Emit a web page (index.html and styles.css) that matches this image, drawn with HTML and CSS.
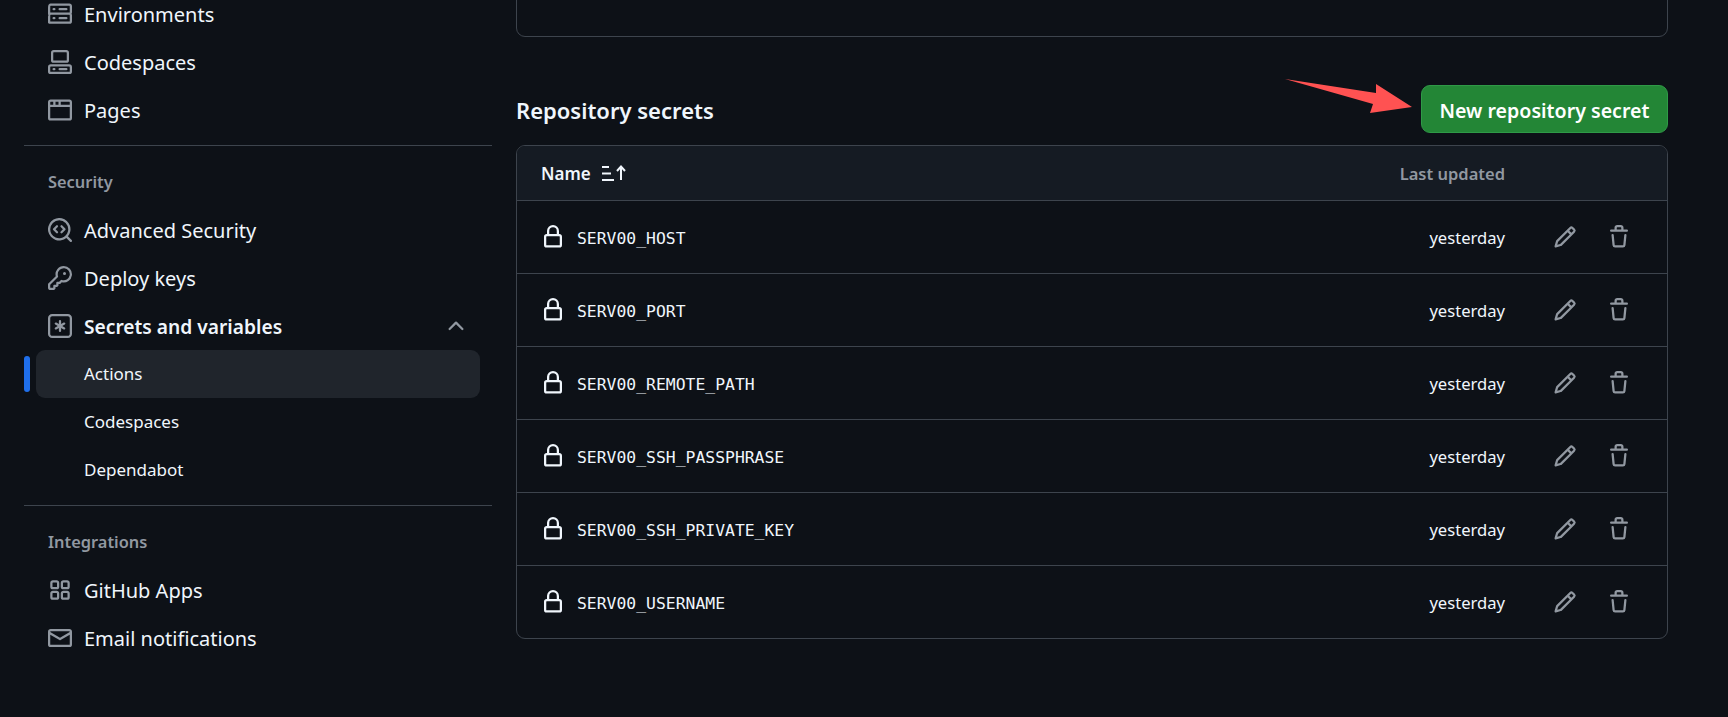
FILE: index.html
```html
<!DOCTYPE html>
<html lang="en">

<head>
    <meta charset="UTF-8">
    <meta name="viewport" content="width=device-width, initial-scale=1.0">
    <title>Actions secrets</title>
    <link rel="stylesheet" href="styles.css">
</head>

<body>
    <svg class="iconos" width="0" height="0">
        <symbol id="i-server" viewBox="0 0 16 16"><path d="M1.75 1h12.5c.966 0 1.75.784 1.75 1.75v4c0 .372-.116.717-.314 1 .198.283.314.628.314 1v4a1.75 1.75 0 0 1-1.75 1.75H1.75A1.75 1.75 0 0 1 0 13.75v-4c0-.372.116-.717.314-1a1.739 1.739 0 0 1-.314-1v-4C0 1.784.784 1 1.75 1ZM1.5 2.75v4c0 .138.112.25.25.25h12.5a.25.25 0 0 0 .25-.25v-4a.25.25 0 0 0-.25-.25H1.75a.25.25 0 0 0-.25.25Zm.25 5.75a.25.25 0 0 0-.25.25v4c0 .138.112.25.25.25h12.5a.25.25 0 0 0 .25-.25v-4a.25.25 0 0 0-.25-.25ZM7 4.75A.75.75 0 0 1 7.75 4h4.5a.75.75 0 0 1 0 1.5h-4.5A.75.75 0 0 1 7 4.75ZM7.75 10h4.5a.75.75 0 0 1 0 1.5h-4.5a.75.75 0 0 1 0-1.5ZM3 4.75A.75.75 0 0 1 3.75 4h.5a.75.75 0 0 1 0 1.5h-.5A.75.75 0 0 1 3 4.75ZM3.75 10h.5a.75.75 0 0 1 0 1.5h-.5a.75.75 0 0 1 0-1.5Z"/></symbol>
        <symbol id="i-codespaces" viewBox="0 0 16 16"><path d="M0 11.25c0-.966.784-1.75 1.75-1.75h12.5c.966 0 1.75.784 1.75 1.75v3A1.75 1.75 0 0 1 14.25 16H1.75A1.75 1.75 0 0 1 0 14.25Zm2-9.5C2 .784 2.784 0 3.75 0h8.5C13.216 0 14 .784 14 1.75v5a1.75 1.75 0 0 1-1.75 1.75h-8.5A1.75 1.75 0 0 1 2 6.75Zm1.75-.25a.25.25 0 0 0-.25.25v5c0 .138.112.25.25.25h8.5a.25.25 0 0 0 .25-.25v-5a.25.25 0 0 0-.25-.25Zm-2 9.5a.25.25 0 0 0-.25.25v3c0 .138.112.25.25.25h12.5a.25.25 0 0 0 .25-.25v-3a.25.25 0 0 0-.25-.25Z"/><path d="M7 12.75a.75.75 0 0 1 .75-.75h4.5a.75.75 0 0 1 0 1.5h-4.5a.75.75 0 0 1-.75-.75Zm-4 0a.75.75 0 0 1 .75-.75h.5a.75.75 0 0 1 0 1.5h-.5a.75.75 0 0 1-.75-.75Z"/></symbol>
        <symbol id="i-browser" viewBox="0 0 16 16"><path d="M0 2.75C0 1.784.784 1 1.75 1h12.5c.966 0 1.75.784 1.75 1.75v10.5A1.75 1.75 0 0 1 14.25 15H1.75A1.75 1.75 0 0 1 0 13.25ZM14.5 6h-13v7.25c0 .138.112.25.25.25h12.5a.25.25 0 0 0 .25-.25Zm-6-3.5v2h6V2.75a.25.25 0 0 0-.25-.25ZM5 2.5v2h2v-2Zm-3.25 0a.25.25 0 0 0-.25.25V4.5h2v-2Z"/></symbol>
        <symbol id="i-scan" viewBox="0 0 16 16"><path d="M8.47 4.97a.75.75 0 0 0 0 1.06L9.94 7.5 8.47 8.97a.75.75 0 1 0 1.06 1.06l2-2a.75.75 0 0 0 0-1.06l-2-2a.75.75 0 0 0-1.06 0ZM6.53 6.03a.75.75 0 0 0-1.06-1.06l-2 2a.75.75 0 0 0 0 1.06l2 2a.75.75 0 1 0 1.06-1.06L5.06 7.5l1.47-1.47Z"/><path d="M12.246 13.307a7.501 7.501 0 1 1 1.06-1.06l2.474 2.473a.749.749 0 0 1-.326 1.275.749.749 0 0 1-.734-.215ZM1.5 7.5a6.002 6.002 0 0 0 3.547 5.475A6.002 6.002 0 0 0 13.5 7.5 6.002 6.002 0 0 0 7.5 1.5a6 6 0 0 0-6 6Z"/></symbol>
        <symbol id="i-key" viewBox="0 0 16 16"><path d="M10.5 0a5.499 5.499 0 1 1-1.288 10.848l-.932.932a.749.749 0 0 1-.53.22H7v.75a.749.749 0 0 1-.22.53l-.5.5a.749.749 0 0 1-.53.22H5v.75a.749.749 0 0 1-.22.53l-.5.5a.749.749 0 0 1-.53.22h-2A1.75 1.75 0 0 1 0 14.25v-2c0-.199.079-.389.22-.53l4.932-4.932A5.5 5.5 0 0 1 10.5 0Zm-4 5.5c-.001.431.069.86.205 1.269a.75.75 0 0 1-.181.768L1.5 12.56v1.69c0 .138.112.25.25.25h1.69l.06-.06v-1.19a.75.75 0 0 1 .75-.75h1.19l.06-.06v-1.19a.75.75 0 0 1 .75-.75h1.19l1.023-1.025a.75.75 0 0 1 .768-.18A4 4 0 1 0 6.5 5.5ZM11 6a1 1 0 1 1 0-2 1 1 0 0 1 0 2Z"/></symbol>
        <symbol id="i-asterisk" viewBox="0 0 16 16"><path d="M0 2.75A2.75 2.75 0 0 1 2.75 0h10.5A2.75 2.75 0 0 1 16 2.75v10.5A2.75 2.75 0 0 1 13.25 16H2.75A2.75 2.75 0 0 1 0 13.25ZM2.75 1.5c-.69 0-1.25.56-1.25 1.25v10.5c0 .69.56 1.25 1.25 1.25h10.5c.69 0 1.25-.56 1.25-1.25V2.75c0-.69-.56-1.25-1.25-1.25Z"/><path d="M8 4a.75.75 0 0 1 .75.75V6.7l1.69-.975a.75.75 0 0 1 .75 1.3L9.5 8l1.69.976a.75.75 0 0 1-.75 1.298L8.75 9.3v1.951a.75.75 0 0 1-1.5 0V9.299l-1.69.976a.75.75 0 0 1-.75-1.3L6.5 8l-1.69-.975a.75.75 0 0 1 .75-1.3l1.69.976V4.75A.75.75 0 0 1 8 4Z"/></symbol>
        <symbol id="i-chevron" viewBox="0 0 16 16"><path d="M3.22 10.53a.749.749 0 0 1 0-1.06l4.25-4.25a.749.749 0 0 1 1.06 0l4.25 4.25a.749.749 0 0 1-.326 1.275.749.749 0 0 1-.734-.215L8 6.811 4.28 10.53a.749.749 0 0 1-1.06 0Z"/></symbol>
        <symbol id="i-apps" viewBox="0 0 16 16"><path d="M1.5 3.25c0-.966.784-1.75 1.75-1.75h2.5c.966 0 1.75.784 1.75 1.75v2.5A1.75 1.75 0 0 1 5.75 7.5h-2.5A1.75 1.75 0 0 1 1.5 5.75Zm7 0c0-.966.784-1.75 1.75-1.75h2.5c.966 0 1.75.784 1.75 1.75v2.5a1.75 1.75 0 0 1-1.75 1.75h-2.5A1.75 1.75 0 0 1 8.5 5.75Zm-7 7c0-.966.784-1.75 1.75-1.75h2.5c.966 0 1.75.784 1.75 1.75v2.5a1.75 1.75 0 0 1-1.75 1.75h-2.5a1.75 1.75 0 0 1-1.75-1.75Zm7 0c0-.966.784-1.75 1.75-1.75h2.5c.966 0 1.75.784 1.75 1.75v2.5a1.75 1.75 0 0 1-1.75 1.75h-2.5a1.75 1.75 0 0 1-1.75-1.75ZM3.25 3a.25.25 0 0 0-.25.25v2.5c0 .138.112.25.25.25h2.5A.25.25 0 0 0 6 5.75v-2.5A.25.25 0 0 0 5.75 3Zm7 0a.25.25 0 0 0-.25.25v2.5c0 .138.112.25.25.25h2.5a.25.25 0 0 0 .25-.25v-2.5a.25.25 0 0 0-.25-.25ZM3 10.25v2.5c0 .138.112.25.25.25h2.5a.25.25 0 0 0 .25-.25v-2.5a.25.25 0 0 0-.25-.25h-2.5a.25.25 0 0 0-.25.25Zm7.25-.25a.25.25 0 0 0-.25.25v2.5c0 .138.112.25.25.25h2.5a.25.25 0 0 0 .25-.25v-2.5a.25.25 0 0 0-.25-.25Z"/></symbol>
        <symbol id="i-mail" viewBox="0 0 16 16"><path d="M1.75 2h12.5c.966 0 1.75.784 1.75 1.75v8.5A1.75 1.75 0 0 1 14.25 14H1.75A1.75 1.75 0 0 1 0 12.25v-8.5C0 2.784.784 2 1.75 2ZM1.5 12.251c0 .138.112.25.25.25h12.5a.25.25 0 0 0 .25-.25V5.809L8.38 9.397a.75.75 0 0 1-.76 0L1.5 5.809v6.442Zm13-8.181v-.32a.25.25 0 0 0-.25-.25H1.75a.25.25 0 0 0-.25.25v.32L8 7.88Z"/></symbol>
        <symbol id="i-lock" viewBox="0 0 16 16"><path d="M4 4a4 4 0 0 1 8 0v2h.25c.966 0 1.75.784 1.75 1.75v5.5A1.75 1.75 0 0 1 12.25 15h-8.5A1.75 1.75 0 0 1 2 13.25v-5.5C2 6.784 2.784 6 3.75 6H4Zm8.25 3.5h-8.5a.25.25 0 0 0-.25.25v5.5c0 .138.112.25.25.25h8.5a.25.25 0 0 0 .25-.25v-5.5a.25.25 0 0 0-.25-.25ZM10.5 6V4a2.5 2.5 0 1 0-5 0v2Z"/></symbol>
        <symbol id="i-pencil" viewBox="0 0 16 16"><path d="M11.013 1.427a1.75 1.75 0 0 1 2.474 0l1.086 1.086a1.75 1.75 0 0 1 0 2.474l-8.61 8.61c-.21.21-.47.364-.756.445l-3.251.93a.75.75 0 0 1-.927-.928l.929-3.25c.081-.286.235-.547.445-.758l8.61-8.61Zm.176 4.823L9.75 4.81l-6.286 6.287a.253.253 0 0 0-.064.108l-.558 1.953 1.953-.558a.253.253 0 0 0 .108-.064Zm1.238-3.763a.25.25 0 0 0-.354 0L10.811 3.75l1.439 1.44 1.263-1.263a.25.25 0 0 0 0-.354Z"/></symbol>
        <symbol id="i-trash" viewBox="0 0 16 16"><path d="M11 1.75V3h2.25a.75.75 0 0 1 0 1.5H2.75a.75.75 0 0 1 0-1.5H5V1.75C5 .784 5.784 0 6.75 0h2.5C10.216 0 11 .784 11 1.75ZM4.496 6.675l.66 6.6a.25.25 0 0 0 .249.225h5.19a.25.25 0 0 0 .249-.225l.66-6.6a.75.75 0 0 1 1.492.149l-.66 6.6A1.748 1.748 0 0 1 10.595 15h-5.19a1.75 1.75 0 0 1-1.741-1.575l-.66-6.6a.75.75 0 1 1 1.492-.15ZM6.5 1.75V3h3V1.75a.25.25 0 0 0-.25-.25h-2.5a.25.25 0 0 0-.25.25Z"/></symbol>
    </svg>

    <div class="contenedor">
        <nav class="lateral">
            <a class="item"><svg class="icono"><use href="#i-server"/></svg>Environments</a>
            <a class="item"><svg class="icono"><use href="#i-codespaces"/></svg>Codespaces</a>
            <a class="item"><svg class="icono"><use href="#i-browser"/></svg>Pages</a>
            <hr class="separador">
            <div class="grupo">Security</div>
            <a class="item"><svg class="icono"><use href="#i-scan"/></svg>Advanced Security</a>
            <a class="item"><svg class="icono"><use href="#i-key"/></svg>Deploy keys</a>
            <a class="item abierto"><svg class="icono"><use href="#i-asterisk"/></svg>Secrets and variables<svg class="chevron"><use href="#i-chevron"/></svg></a>
            <a class="item sub activo">Actions</a>
            <a class="item sub">Codespaces</a>
            <a class="item sub">Dependabot</a>
            <hr class="separador">
            <div class="grupo">Integrations</div>
            <a class="item"><svg class="icono"><use href="#i-apps"/></svg>GitHub Apps</a>
            <a class="item"><svg class="icono"><use href="#i-mail"/></svg>Email notifications</a>
        </nav>

        <main class="principal">
            <div class="caja-anterior"></div>

            <div class="cabecera">
                <h2 class="titulo">Repository secrets</h2>
                <button class="btn-nuevo">New repository secret</button>
            </div>

            <div class="tabla">
                <div class="fila fila-cabecera">
                    <span class="col-nombre">Name
                        <svg class="orden" viewBox="0 0 24 16">
                            <path d="M0 2h7M0 8.5h9M0 15h12" />
                            <path d="M19 15V1.5M15 6l4-4.5L23 6" />
                        </svg>
                    </span>
                    <span class="col-fecha">Last updated</span>
                </div>
                <div class="fila">
                    <svg class="icono candado"><use href="#i-lock"/></svg><code class="secreto">SERV00_HOST</code>
                    <span class="fecha">yesterday</span>
                    <svg class="icono accion"><use href="#i-pencil"/></svg><svg class="icono accion"><use href="#i-trash"/></svg>
                </div>
                <div class="fila">
                    <svg class="icono candado"><use href="#i-lock"/></svg><code class="secreto">SERV00_PORT</code>
                    <span class="fecha">yesterday</span>
                    <svg class="icono accion"><use href="#i-pencil"/></svg><svg class="icono accion"><use href="#i-trash"/></svg>
                </div>
                <div class="fila">
                    <svg class="icono candado"><use href="#i-lock"/></svg><code class="secreto">SERV00_REMOTE_PATH</code>
                    <span class="fecha">yesterday</span>
                    <svg class="icono accion"><use href="#i-pencil"/></svg><svg class="icono accion"><use href="#i-trash"/></svg>
                </div>
                <div class="fila">
                    <svg class="icono candado"><use href="#i-lock"/></svg><code class="secreto">SERV00_SSH_PASSPHRASE</code>
                    <span class="fecha">yesterday</span>
                    <svg class="icono accion"><use href="#i-pencil"/></svg><svg class="icono accion"><use href="#i-trash"/></svg>
                </div>
                <div class="fila">
                    <svg class="icono candado"><use href="#i-lock"/></svg><code class="secreto">SERV00_SSH_PRIVATE_KEY</code>
                    <span class="fecha">yesterday</span>
                    <svg class="icono accion"><use href="#i-pencil"/></svg><svg class="icono accion"><use href="#i-trash"/></svg>
                </div>
                <div class="fila">
                    <svg class="icono candado"><use href="#i-lock"/></svg><code class="secreto">SERV00_USERNAME</code>
                    <span class="fecha">yesterday</span>
                    <svg class="icono accion"><use href="#i-pencil"/></svg><svg class="icono accion"><use href="#i-trash"/></svg>
                </div>
            </div>
        </main>
    </div>

    <!-- flecha dibujada encima de la captura -->
    <svg class="flecha" viewBox="0 0 130 36">
        <polygon points="0,0 91,14 91,5 127,28 85,34 88,25" />
    </svg>
</body>

</html>
```

FILE: styles.css
```css
html,
body {
    margin: 0;
    height: 717px;
    overflow: hidden;
}

body {
    position: relative;
    background-color: #0d1117;
    color: #f0f6fc;
    font-family: "Noto Sans", Arial, sans-serif;
    font-size: 20px;
}

.iconos {
    position: absolute;
}

.contenedor {
    display: flex;
    gap: 24px;
    padding-left: 24px;
    padding-right: 60px;
}

.lateral {
    width: 468px;
    flex-shrink: 0;
    margin-top: -10px;
}

.item {
    display: flex;
    align-items: center;
    height: 48px;
    padding-left: 24px;
    gap: 12px;
}

.icono {
    width: 24px;
    height: 24px;
    fill: #9198a1;
    flex-shrink: 0;
}

.abierto {
    font-size: 19.2px;
    font-weight: 600;
}

.chevron {
    width: 24px;
    height: 24px;
    fill: #9198a1;
    margin-left: auto;
    margin-right: 24px;
}

.sub {
    margin-left: 12px;
    padding-left: 48px;
    padding-bottom: 2px;
    height: 46px;
    margin-right: 12px;
    font-size: 17px;
    border-radius: 9px;
    position: relative;
}

.activo {
    background-color: #20252c;
}

.activo::before {
    content: "";
    position: absolute;
    left: -12px;
    top: 6px;
    width: 6px;
    height: 36px;
    border-radius: 3px;
    background-color: #1f6feb;
}

.separador {
    border: none;
    height: 1px;
    background-color: #3d444d;
    margin: 11px 0 0;
}

.grupo {
    height: 46px;
    padding-bottom: 2px;
    margin-top: 12px;
    padding-left: 24px;
    font-size: 16.4px;
    font-weight: 600;
    color: #9198a1;
    display: flex;
    align-items: center;
}

.principal {
    flex: 1;
    min-width: 0;
}

.caja-anterior {
    height: 57px;
    margin-top: -20px;
    box-sizing: border-box;
    border: 1px solid #3d444d;
    border-radius: 9px;
}

.cabecera {
    display: flex;
    justify-content: space-between;
    align-items: center;
    margin-top: 48px;
}

.titulo {
    margin: 2px 0 0;
    font-size: 22px;
    font-weight: 600;
}

.btn-nuevo {
    height: 48px;
    width: 247px;
    padding: 2px 0 0;
    font-family: inherit;
    font-size: 19.6px;
    font-weight: 600;
    color: #fff;
    background-color: #238636;
    border: 1px solid #2f9a47;
    border-radius: 9px;
}

.tabla {
    margin-top: 12px;
    border: 1px solid #3d444d;
    border-radius: 9px;
    overflow: hidden;
}

.fila {
    display: flex;
    align-items: center;
    height: 73px;
    box-sizing: border-box;
    padding: 0 36px 0 24px;
    border-top: 1px solid #3d444d;
}

.fila-cabecera {
    height: 54px;
    border-top: none;
    background-color: #151b23;
    font-size: 17px;
    font-weight: 600;
}

.col-nombre {
    display: flex;
    align-items: center;
    gap: 11px;
}

.col-fecha {
    margin-left: auto;
    margin-right: 126px;
    font-size: 16.5px;
    color: #9198a1;
}

.orden {
    width: 24px;
    height: 16px;
    fill: none;
    stroke: #f0f6fc;
    stroke-width: 2;
}

.candado {
    fill: #f0f6fc;
}

.secreto {
    margin-left: 12px;
    padding-top: 2px;
    font-family: "DejaVu Sans Mono", monospace;
    font-size: 16.4px;
}

.fecha {
    margin-left: auto;
    margin-right: 48px;
    font-size: 16.6px;
}

.accion + .accion {
    margin-left: 30px;
}

.flecha {
    position: absolute;
    left: 1285px;
    top: 79px;
    width: 130px;
    height: 36px;
    fill: #ff5252;
}
```
